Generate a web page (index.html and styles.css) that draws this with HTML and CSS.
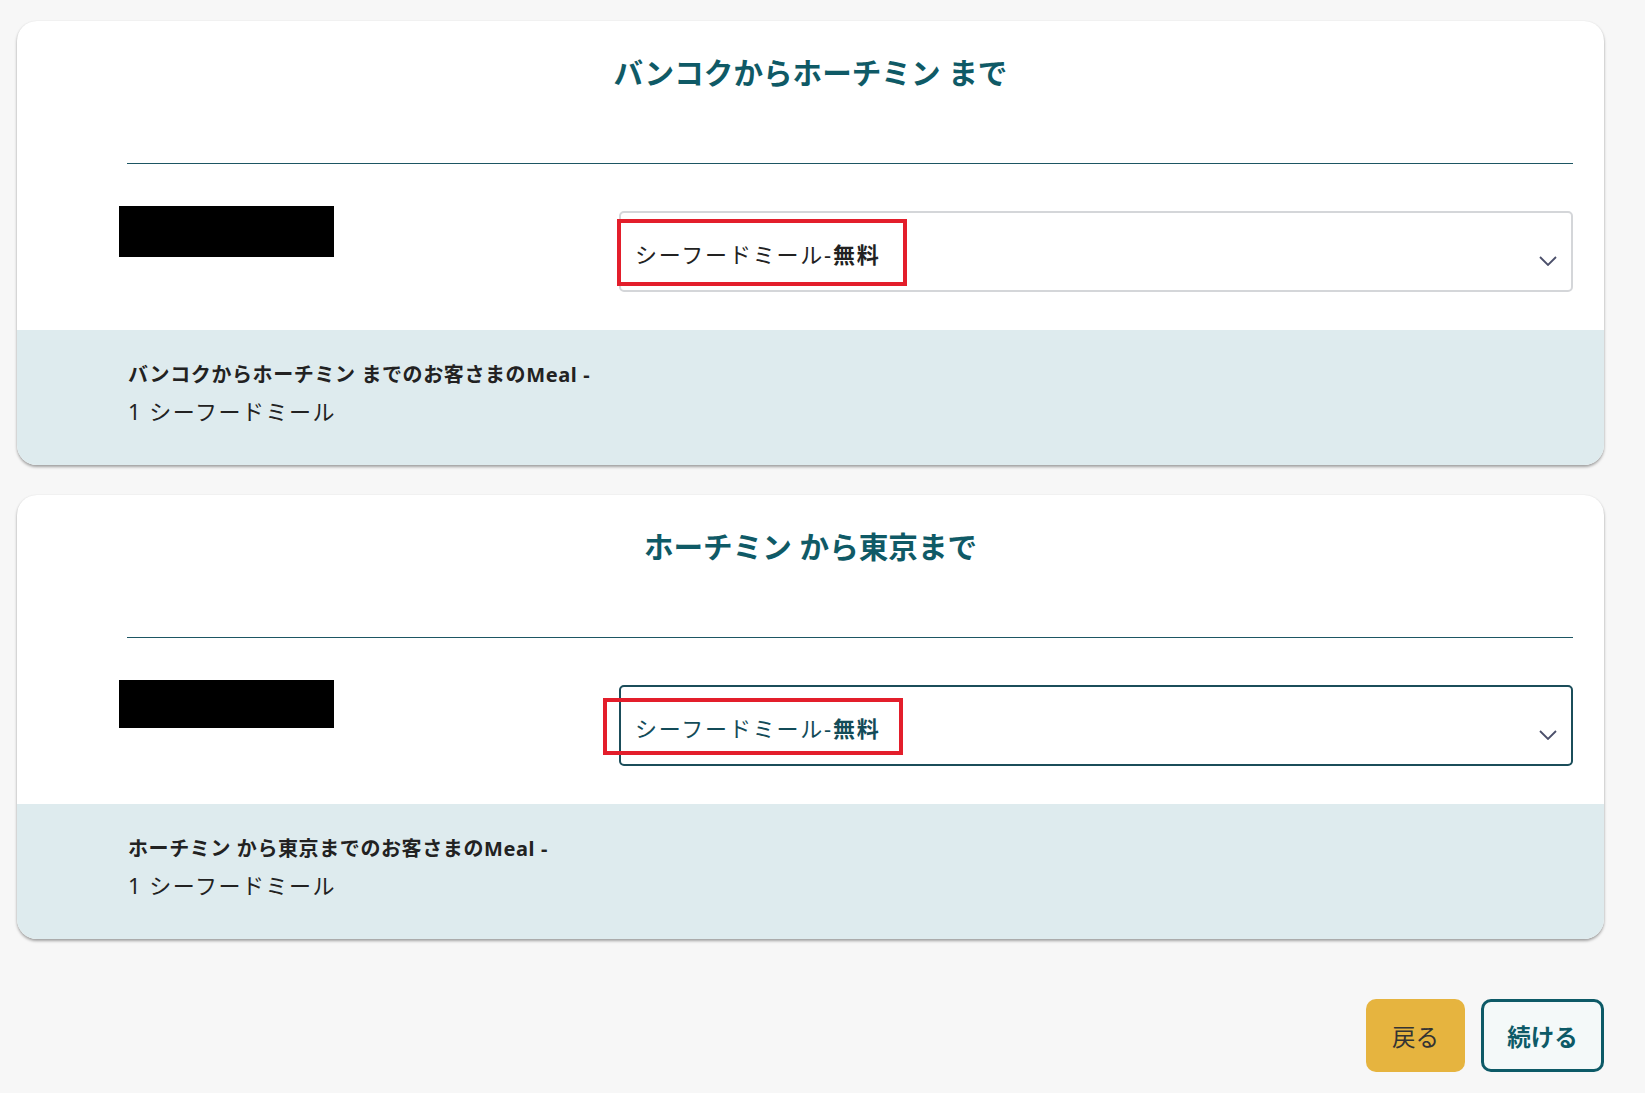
FILE: index.html
```html
<!DOCTYPE html>
<html lang="ja">
<head>
<meta charset="utf-8">
<title>Meal</title>
<link rel="stylesheet" href="styles.css">
</head>
<body>
<div class="page">
  <section class="card">
    <div class="card-main">
      <h2 class="seg-title">バンコクからホーチミン まで</h2>
      <div class="divider"></div>
      <div class="pax-row">
        <div class="redact"></div>
        <div class="select select-idle">
          <span class="select-text">シーフードミール-<b>無料</b></span>
          <svg class="chev" width="18" height="10" viewBox="0 0 18 10"><path d="M1 1 L9 9 L17 1" fill="none" stroke="#4b4f6a" stroke-width="1.8"/></svg>
          <div class="highlight hl-a"></div>
        </div>
      </div>
    </div>
    <div class="summary">
      <p class="sum-label">バンコクからホーチミン までのお客さまのMeal -</p>
      <p class="sum-value">1 シーフードミール</p>
    </div>
  </section>

  <section class="card">
    <div class="card-main">
      <h2 class="seg-title">ホーチミン から東京まで</h2>
      <div class="divider"></div>
      <div class="pax-row">
        <div class="redact redact-short"></div>
        <div class="select select-focus">
          <span class="select-text">シーフードミール-<b>無料</b></span>
          <svg class="chev" width="18" height="10" viewBox="0 0 18 10"><path d="M1 1 L9 9 L17 1" fill="none" stroke="#4b4f6a" stroke-width="1.8"/></svg>
          <div class="highlight hl-b"></div>
        </div>
      </div>
    </div>
    <div class="summary">
      <p class="sum-label">ホーチミン から東京までのお客さまのMeal -</p>
      <p class="sum-value">1 シーフードミール</p>
    </div>
  </section>

  <div class="actions">
    <button class="btn btn-back">戻る</button>
    <button class="btn btn-next">続ける</button>
  </div>
</div>
</body>
</html>
```

FILE: styles.css
```css
* { box-sizing: border-box; }
html, body {
  margin: 0;
  padding: 0;
  background: #f7f7f7;
  font-family: "Noto Sans", "Noto Sans CJK JP", sans-serif;
  color: #222;
}
.page {
  width: 1587px;
  margin-left: 17px;
  padding-top: 21px;
  display: flex;
  flex-direction: column;
  gap: 30px;
}
.card {
  background: #fff;
  border-radius: 20px;
  box-shadow: 0 2px 3px rgba(0,0,0,0.35), 0 0 2px rgba(0,0,0,0.06);
  overflow: hidden;
}
.card-main {
  padding: 28px 31px 38px 0;
}
.seg-title {
  margin: 0;
  text-align: center;
  font-size: 29.6px;
  line-height: 48px;
  font-weight: 700;
  color: #0f5a66;
  padding-left: 31px;
}
.divider {
  height: 1px;
  background: #1d5663;
  margin: 66px 0 0 110px;
}
.pax-row {
  display: grid;
  grid-template-columns: 500px 1fr;
  align-items: start;
  padding: 42px 0 0 102px;
}
.redact {
  width: 215px;
  height: 51px;
  background: #000;
}
.redact-short {
  height: 48px;
}
.select {
  position: relative;
  margin-top: 5px;
  height: 81px;
  border-radius: 5px;
  background: #fff;
  display: flex;
  align-items: center;
  justify-content: space-between;
  padding: 2px 16px 0 14px;
}
.select-idle {
  border: 2px solid #d4d6d9;
}
.select-focus {
  border: 2px solid #1b4d5a;
  color: #134b58;
}
.select-text {
  font-size: 22px;
  letter-spacing: 1.8px;
}
.select-text b { font-weight: 700; }
.chev {
  margin-top: 16px;
  margin-right: -2px;
}
.highlight {
  position: absolute;
  border: 4px solid #e31e2b;
  pointer-events: none;
}
.hl-a { left: -4px; top: 6px; width: 290px; height: 67px; }
.hl-b { left: -18px; top: 11px; width: 300px; height: 57px; }
.summary {
  background: #deebee;
  padding: 28px 0 35px 111px;
}
.summary p { margin: 0; }
.sum-label {
  font-size: 20px;
  line-height: 34px;
  font-weight: 700;
  letter-spacing: 0.6px;
  color: #222;
}
.sum-value {
  font-size: 22px;
  line-height: 38px;
  letter-spacing: 1.5px;
  color: #222;
}
.actions {
  display: flex;
  justify-content: flex-end;
  gap: 16px;
  margin-top: 30px;
}
.btn {
  height: 73px;
  border-radius: 10px;
  font-family: "Noto Sans", "Noto Sans CJK JP", sans-serif;
  font-size: 23.5px;
  cursor: pointer;
}
.btn-back {
  width: 99px;
  background: #e6b43f;
  border: none;
  color: #333;
}
.btn-next {
  width: 123px;
  background: #f4f9f9;
  border: 3px solid #0d5a67;
  color: #0d5a67;
  font-weight: 700;
}
```
